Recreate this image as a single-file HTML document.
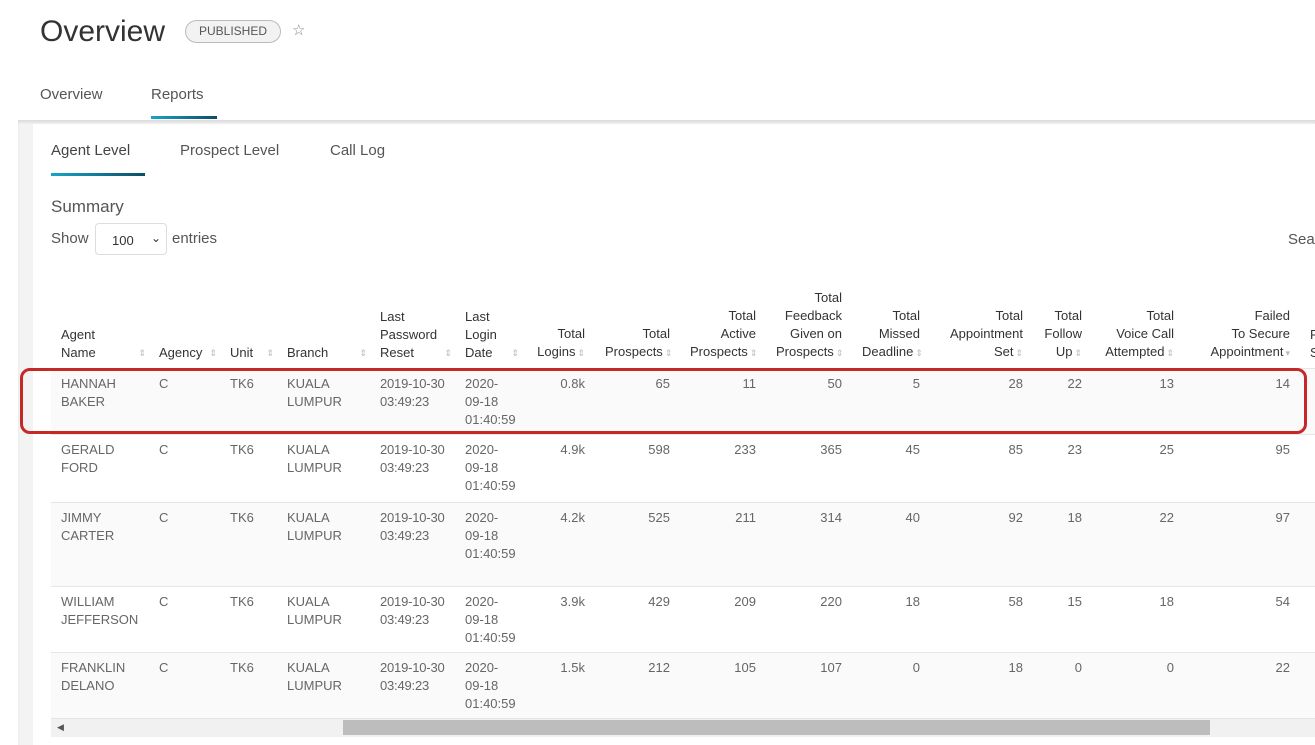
<!DOCTYPE html>
<html><head><meta charset="utf-8"><style>
*{margin:0;padding:0;box-sizing:border-box}
body{width:1315px;height:745px;overflow:hidden;background:#fff;font-family:"Liberation Sans",Arial,sans-serif;position:relative;color:#555}
.a{position:absolute;white-space:nowrap}
.panel{position:absolute;left:18px;top:120px;width:1297px;height:625px;background:#f3f3f3;box-shadow:inset 0 3px 3px -1px #d8d8d8}
.inner{position:absolute;left:33px;top:124px;width:1282px;height:621px;background:#fff}
.wrap{position:absolute;left:51px;top:282px;width:1264px;height:436px;overflow:hidden}
table{border-collapse:collapse;table-layout:fixed;width:1364px;font-size:13px}
th{font-weight:normal;color:#333;vertical-align:bottom;padding:0 10px 6px;line-height:18px;position:relative;text-align:right;height:86px}
th.l{text-align:left}
th.l .s{position:absolute;right:3px;bottom:6px}
.s{color:#bbb;font-size:9px;padding-left:2px}
td{vertical-align:top;padding:6px 10px 0;line-height:18px;color:#666;text-align:right;border-top:1px solid #e6e6e6}
td.l{text-align:left}
td.d{padding-right:0;white-space:nowrap;letter-spacing:-0.2px}
tr.o td{background:#fafafa}
</style></head><body>
<div class="a" style="left:40px;top:15px;font-size:30px;color:#333">Overview</div>
<div class="a" style="left:185px;top:20px;width:96px;height:23px;border:1px solid #bbb;border-radius:12px;background:#f2f2f2;font-size:12px;color:#555;text-align:center;line-height:21px">PUBLISHED</div>
<div class="a" style="left:292px;top:21px;font-size:15px;color:#888">☆</div>
<div class="a" style="left:40px;top:86px;font-size:15px;color:#555">Overview</div>
<div class="a" style="left:151px;top:86px;font-size:15px;color:#555">Reports</div>
<div class="a" style="left:151px;top:116px;width:66px;height:3px;background:linear-gradient(90deg,#1aa3c8,#0d4d66)"></div>
<div class="panel"></div>
<div class="inner"></div>
<div class="a" style="left:51px;top:142px;font-size:15px;color:#444">Agent Level</div>
<div class="a" style="left:180px;top:142px;font-size:15px;color:#555">Prospect Level</div>
<div class="a" style="left:330px;top:142px;font-size:15px;color:#555">Call Log</div>
<div class="a" style="left:51px;top:173px;width:94px;height:3px;background:linear-gradient(90deg,#1aa3c8,#0d4d66)"></div>
<div class="a" style="left:51px;top:197px;font-size:17px;color:#555">Summary</div>
<div class="a" style="left:51px;top:230px;font-size:15px;color:#555">Show</div>
<div class="a" style="left:95px;top:223px;width:72px;height:32px;border:1px solid #ddd;border-radius:4px;font-size:13px;color:#333;padding:9px 0 0 16px">100 <span style="position:absolute;left:55px;top:7px;font-size:12px">⌄</span></div>
<div class="a" style="left:172px;top:230px;font-size:15px;color:#555">entries</div>
<div class="a" style="left:1288px;top:231px;font-size:15px;color:#555">Sea</div>
<div class="wrap"><table>
<colgroup><col style="width:98px"><col style="width:71px"><col style="width:57px"><col style="width:93px"><col style="width:85px"><col style="width:67px"><col style="width:73px"><col style="width:85px"><col style="width:86px"><col style="width:86px"><col style="width:78px"><col style="width:103px"><col style="width:59px"><col style="width:92px"><col style="width:116px"><col style="width:115px"></colgroup>
<tr><th class="l">Agent<br>Name<span class="s">⇕</span></th><th class="l">Agency<span class="s">⇕</span></th><th class="l">Unit<span class="s">⇕</span></th><th class="l">Branch<span class="s">⇕</span></th><th class="l">Last<br>Password<br>Reset<span class="s">⇕</span></th><th class="l">Last<br>Login<br>Date<span class="s">⇕</span></th><th>Total<br>Logins<span class="s">⇕</span></th><th>Total<br>Prospects<span class="s">⇕</span></th><th>Total<br>Active<br>Prospects<span class="s">⇕</span></th><th>Total<br>Feedback<br>Given on<br>Prospects<span class="s">⇕</span></th><th>Total<br>Missed<br>Deadline<span class="s">⇕</span></th><th>Total<br>Appointment<br>Set<span class="s">⇕</span></th><th>Total<br>Follow<br>Up<span class="s">⇕</span></th><th>Total<br>Voice Call<br>Attempted<span class="s">⇕</span></th><th>Failed<br>To Secure<br>Appointment<span class="s">▾</span></th><th class="l">Pr<br>S</th></tr>
<tr class="o" style="height:66px"><td class="l">HANNAH<br>BAKER</td><td class="l">C</td><td class="l">TK6</td><td class="l">KUALA<br>LUMPUR</td><td class="l d">2019-10-30<br>03:49:23</td><td class="l">2020-<br>09-18<br>01:40:59</td><td>0.8k</td><td>65</td><td>11</td><td>50</td><td>5</td><td>28</td><td>22</td><td>13</td><td>14</td><td></td></tr>
<tr style="height:68px"><td class="l">GERALD<br>FORD</td><td class="l">C</td><td class="l">TK6</td><td class="l">KUALA<br>LUMPUR</td><td class="l d">2019-10-30<br>03:49:23</td><td class="l">2020-<br>09-18<br>01:40:59</td><td>4.9k</td><td>598</td><td>233</td><td>365</td><td>45</td><td>85</td><td>23</td><td>25</td><td>95</td><td></td></tr>
<tr class="o" style="height:84px"><td class="l">JIMMY<br>CARTER</td><td class="l">C</td><td class="l">TK6</td><td class="l">KUALA<br>LUMPUR</td><td class="l d">2019-10-30<br>03:49:23</td><td class="l">2020-<br>09-18<br>01:40:59</td><td>4.2k</td><td>525</td><td>211</td><td>314</td><td>40</td><td>92</td><td>18</td><td>22</td><td>97</td><td></td></tr>
<tr style="height:66px"><td class="l">WILLIAM<br>JEFFERSON</td><td class="l">C</td><td class="l">TK6</td><td class="l">KUALA<br>LUMPUR</td><td class="l d">2019-10-30<br>03:49:23</td><td class="l">2020-<br>09-18<br>01:40:59</td><td>3.9k</td><td>429</td><td>209</td><td>220</td><td>18</td><td>58</td><td>15</td><td>18</td><td>54</td><td></td></tr>
<tr class="o" style="height:66px"><td class="l">FRANKLIN<br>DELANO</td><td class="l">C</td><td class="l">TK6</td><td class="l">KUALA<br>LUMPUR</td><td class="l d">2019-10-30<br>03:49:23</td><td class="l">2020-<br>09-18<br>01:40:59</td><td>1.5k</td><td>212</td><td>105</td><td>107</td><td>0</td><td>18</td><td>0</td><td>0</td><td>22</td><td></td></tr>
</table></div>
<div class="a" style="left:51px;top:718px;width:1264px;height:19px;background:#f1f1f1;border-top:1px solid #e4e4e4"></div>
<div class="a" style="left:57px;top:722px;font-size:9px;color:#555">◀</div>
<div class="a" style="left:343px;top:720px;width:867px;height:15px;background:#bdbdbd"></div>
<div class="a" style="left:20px;top:368px;width:1287px;height:66px;border:3px solid #c62828;border-radius:10px"></div>
</body></html>
